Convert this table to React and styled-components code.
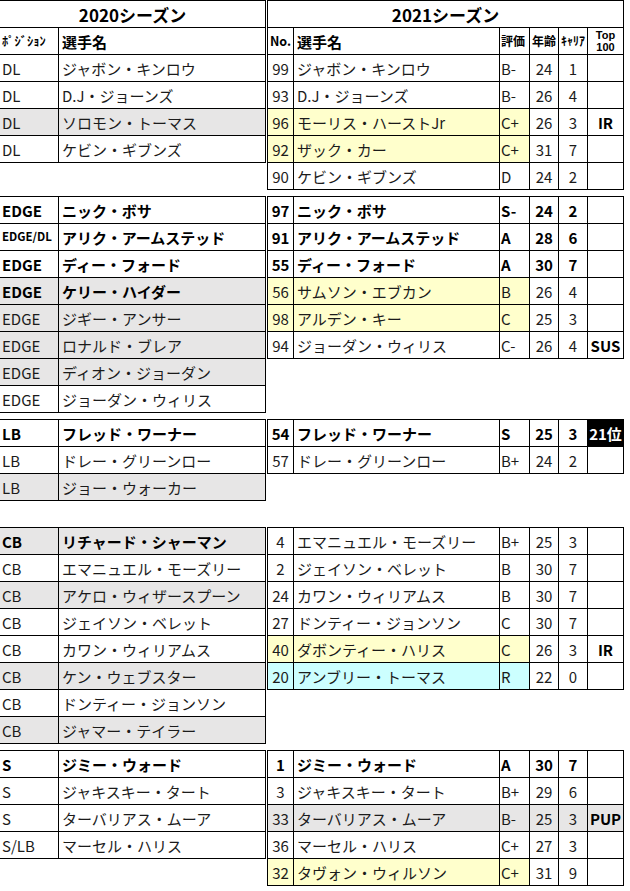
import React from 'react';
import styled, { createGlobalStyle } from 'styled-components';

const GlobalStyle = createGlobalStyle`
  html, body {
    margin: 0;
    padding: 0;
    background: #fff;
  }
  body {
    font-family: "Noto Sans CJK JP", sans-serif;
    color: #1b1b1b;
  }
`;

const LEFT_COLS = '59px 207px';
const RIGHT_COLS = '26px 206px 30px 29px 29px 36px';

const fills = {
  gray: '#e7e6e6',
  yellow: '#ffffcc',
  cyan: '#ccffff',
  black: '#000',
};

const groups = [
  {
    gap: 6,
    left: [
      { pos: 'DL', name: 'ジャボン・キンロウ' },
      { pos: 'DL', name: 'D.J・ジョーンズ' },
      { pos: 'DL', name: 'ソロモン・トーマス', fill: 'gray' },
      { pos: 'DL', name: 'ケビン・ギブンズ' },
    ],
    right: [
      { no: '99', name: 'ジャボン・キンロウ', grade: 'B-', age: 24, career: 1 },
      { no: '93', name: 'D.J・ジョーンズ', grade: 'B-', age: 26, career: 4 },
      { no: '96', name: 'モーリス・ハーストJr', grade: 'C+', age: 26, career: 3, top: 'IR', hl: 'yellow' },
      { no: '92', name: 'ザック・カー', grade: 'C+', age: 31, career: 7, hl: 'yellow' },
      { no: '90', name: 'ケビン・ギブンズ', grade: 'D', age: 24, career: 2 },
    ],
  },
  {
    gap: 6,
    left: [
      { pos: 'EDGE', name: 'ニック・ボサ', bold: true },
      { pos: 'EDGE/DL', name: 'アリク・アームステッド', bold: true, small: true },
      { pos: 'EDGE', name: 'ディー・フォード', bold: true },
      { pos: 'EDGE', name: 'ケリー・ハイダー', bold: true, fill: 'gray' },
      { pos: 'EDGE', name: 'ジギー・アンサー', fill: 'gray' },
      { pos: 'EDGE', name: 'ロナルド・ブレア', fill: 'gray' },
      { pos: 'EDGE', name: 'ディオン・ジョーダン', fill: 'gray' },
      { pos: 'EDGE', name: 'ジョーダン・ウィリス' },
    ],
    right: [
      { no: '97', name: 'ニック・ボサ', grade: 'S-', age: 24, career: 2, bold: true },
      { no: '91', name: 'アリク・アームステッド', grade: 'A', age: 28, career: 6, bold: true },
      { no: '55', name: 'ディー・フォード', grade: 'A', age: 30, career: 7, bold: true },
      { no: '56', name: 'サムソン・エブカン', grade: 'B', age: 26, career: 4, hl: 'yellow' },
      { no: '98', name: 'アルデン・キー', grade: 'C', age: 25, career: 3, hl: 'yellow' },
      { no: '94', name: 'ジョーダン・ウィリス', grade: 'C-', age: 26, career: 4, top: 'SUS' },
    ],
  },
  {
    gap: 26,
    left: [
      { pos: 'LB', name: 'フレッド・ワーナー', bold: true },
      { pos: 'LB', name: 'ドレー・グリーンロー' },
      { pos: 'LB', name: 'ジョー・ウォーカー', fill: 'gray' },
    ],
    right: [
      { no: '54', name: 'フレッド・ワーナー', grade: 'S', age: 25, career: 3, top: '21位', rank: true, bold: true },
      { no: '57', name: 'ドレー・グリーンロー', grade: 'B+', age: 24, career: 2 },
    ],
  },
  {
    gap: 6,
    left: [
      { pos: 'CB', name: 'リチャード・シャーマン', bold: true, fill: 'gray' },
      { pos: 'CB', name: 'エマニュエル・モーズリー' },
      { pos: 'CB', name: 'アケロ・ウィザースプーン', fill: 'gray' },
      { pos: 'CB', name: 'ジェイソン・ベレット' },
      { pos: 'CB', name: 'カワン・ウィリアムス' },
      { pos: 'CB', name: 'ケン・ウェブスター', fill: 'gray' },
      { pos: 'CB', name: 'ドンティー・ジョンソン' },
      { pos: 'CB', name: 'ジャマー・テイラー', fill: 'gray' },
    ],
    right: [
      { no: '4', name: 'エマニュエル・モーズリー', grade: 'B+', age: 25, career: 3 },
      { no: '2', name: 'ジェイソン・ベレット', grade: 'B', age: 30, career: 7 },
      { no: '24', name: 'カワン・ウィリアムス', grade: 'B', age: 30, career: 7 },
      { no: '27', name: 'ドンティー・ジョンソン', grade: 'C', age: 30, career: 7 },
      { no: '40', name: 'ダボンティー・ハリス', grade: 'C', age: 26, career: 3, top: 'IR', hl: 'yellow' },
      { no: '20', name: 'アンブリー・トーマス', grade: 'R', age: 22, career: 0, hl: 'cyan' },
    ],
  },
  {
    gap: 0,
    left: [
      { pos: 'S', name: 'ジミー・ウォード', bold: true },
      { pos: 'S', name: 'ジャキスキー・タート' },
      { pos: 'S', name: 'ターバリアス・ムーア' },
      { pos: 'S/LB', name: 'マーセル・ハリス' },
    ],
    right: [
      { no: '1', name: 'ジミー・ウォード', grade: 'A', age: 30, career: 7, bold: true },
      { no: '3', name: 'ジャキスキー・タート', grade: 'B+', age: 29, career: 6 },
      { no: '33', name: 'ターバリアス・ムーア', grade: 'B-', age: 25, career: 3, top: 'PUP', fill: 'gray' },
      { no: '36', name: 'マーセル・ハリス', grade: 'C+', age: 27, career: 3 },
      { no: '32', name: 'タヴォン・ウィルソン', grade: 'C+', age: 31, career: 9, hl: 'yellow' },
    ],
  },
];

const App = () => {
  return (
    <>
      <GlobalStyle />
      <Sheet>
        {groups.map((g, gi) => (
          <Block key={gi} $gap={g.gap}>
            <Table>
              {gi === 0 && (
                <>
                  <Row $cols={LEFT_COLS}>
                    <Title>2020シーズン</Title>
                  </Row>
                  <Row $cols={LEFT_COLS}>
                    <Cell $bold $size={12.5} $pad={2}>ﾎﾟｼﾞｼｮﾝ</Cell>
                    <Cell $bold>選手名</Cell>
                  </Row>
                </>
              )}
              {g.left.map((r, i) => (
                <Row key={i} $cols={LEFT_COLS} $fill={r.fill}>
                  <Cell $bold={r.bold} $size={r.small ? 11.5 : 15} $pad={2}>{r.pos}</Cell>
                  <Cell $bold={r.bold}>{r.name}</Cell>
                </Row>
              ))}
            </Table>
            <Table $edge>
              {gi === 0 && (
                <>
                  <Row $cols={RIGHT_COLS}>
                    <Title>2021シーズン</Title>
                  </Row>
                  <Row $cols={RIGHT_COLS}>
                    <Cell $bold $size={12.5} $align="center" $pad={0}>No.</Cell>
                    <Cell $bold>選手名</Cell>
                    <Cell $bold $size={12} $pad={1}>評価</Cell>
                    <Cell $bold $size={12} $align="center" $pad={0}>年齢</Cell>
                    <Cell $bold $size={12} $align="center" $pad={0}>ｷｬﾘｱ</Cell>
                    <TopHead>
                      <TopLine>Top</TopLine>
                      <TopLine>100</TopLine>
                    </TopHead>
                  </Row>
                </>
              )}
              {g.right.map((r, i) => (
                <Row key={i} $cols={RIGHT_COLS} $fill={r.fill}>
                  <Cell $bold={r.bold} $fill={r.hl} $align="center" $pad={0}>{r.no}</Cell>
                  <Cell $bold={r.bold} $fill={r.hl}>{r.name}</Cell>
                  <Cell $bold={r.bold} $fill={r.hl} $pad={1}>{r.grade}</Cell>
                  <Cell $bold={r.bold} $align="center" $pad={0}>{r.age}</Cell>
                  <Cell $bold={r.bold} $align="center" $pad={0}>{r.career}</Cell>
                  <Cell $bold $fill={r.rank ? 'black' : undefined} $align="center" $pad={0}>
                    {r.top}
                  </Cell>
                </Row>
              ))}
            </Table>
          </Block>
        ))}
      </Sheet>
    </>
  );
};

export default App;

const Sheet = styled.div`
display: flex;
flex-direction: column;
width: 630px;
`;

const Block = styled.div`
display: flex;
align-items: flex-start;
gap: 1px;
margin-bottom: ${(p) => p.$gap}px;
`;

const Table = styled.div`
display: flex;
flex-direction: column;
border-top: 1px solid #000;
border-left: ${(p) => (p.$edge ? '1px solid #000' : 'none')};
`;

const Row = styled.div`
box-sizing: border-box;
display: grid;
grid-template-columns: ${(p) => p.$cols};
height: 27px;
border-bottom: 1px solid #000;
background: ${(p) => (p.$fill ? fills[p.$fill] : '#fff')};
`;

const Cell = styled.div`
box-sizing: border-box;
display: flex;
align-items: center;
justify-content: ${(p) => (p.$align === 'center' ? 'center' : 'flex-start')};
padding: 0 ${(p) => (p.$pad ?? 3)}px;
border-right: 1px solid #000;
background: ${(p) => (p.$fill ? fills[p.$fill] : 'transparent')};
color: ${(p) => (p.$fill === 'black' ? '#fff' : p.$bold ? '#000' : '#1b1b1b')};
font-size: ${(p) => p.$size || 15}px;
font-weight: ${(p) => (p.$bold ? 700 : 400)};
line-height: 1;
white-space: nowrap;
overflow: hidden;
`;

const Title = styled(Cell)`
grid-column: 1 / -1;
justify-content: center;
font-size: 17px;
font-weight: 700;
color: #000;
`;

const TopHead = styled.div`
box-sizing: border-box;
display: flex;
flex-direction: column;
align-items: center;
justify-content: center;
border-right: 1px solid #000;
font-family: "Liberation Sans", Arial, sans-serif;
font-size: 11px;
font-weight: 700;
color: #000;
overflow: hidden;
`;

const TopLine = styled.span`
display: block;
height: 12.5px;
line-height: 12.5px;
`;
